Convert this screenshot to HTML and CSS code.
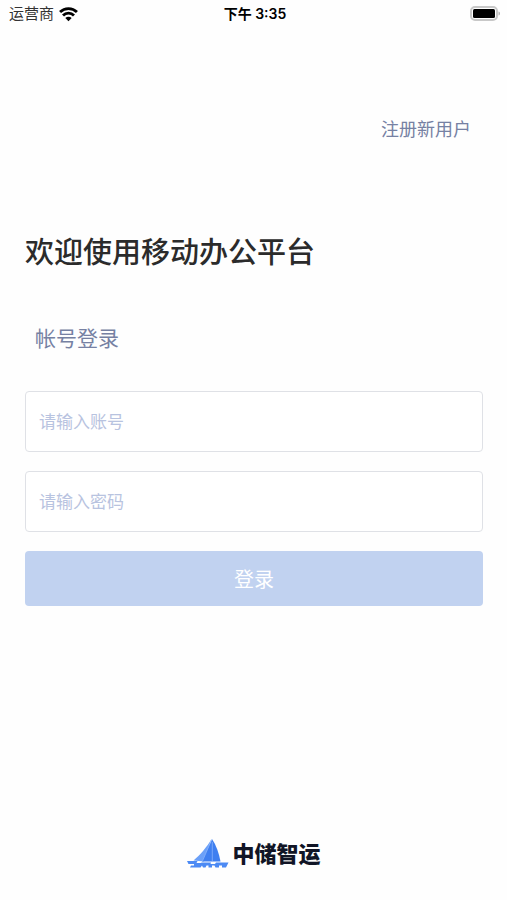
FILE: index.html
```html
<!DOCTYPE html>
<html lang="zh-CN">
<head>
<meta charset="utf-8">
<meta name="viewport" content="width=device-width, initial-scale=1">
<title>中储智运</title>
<link rel="stylesheet" href="styles.css">
</head>
<body>
<header class="status">
  <div class="carrier">
    <span>运营商</span>
    <svg class="wifi" viewBox="0 0 18 14" aria-hidden="true">
      <path d="M1 4.700a11.500 11.500 0 0 1 16 0M3.800 7.900a7.400 7.400 0 0 1 10.400 0" fill="none" stroke="#000" stroke-width="2.700"/>
      <path d="M9 13.300 6 10.300a4.300 4.300 0 0 1 6 0Z"/>
    </svg>
  </div>
  <time class="clock">下午 3:35</time>
  <svg class="battery" viewBox="0 0 31 16" aria-hidden="true">
    <rect x="1" y="1" width="26" height="13" rx="4" fill="#fff" stroke="#c8c8c8" stroke-width="2"/>
    <rect x="3" y="3" width="22" height="9" rx="1.5"/>
    <path d="M28.500 5.500c2 .6 2 3.400 0 4Z" fill="#b4b4b4"/>
  </svg>
</header>
<main class="page">
  <a class="register" href="#">注册新用户</a>
  <h1 class="title">欢迎使用移动办公平台</h1>
  <h2 class="mode">帐号登录</h2>
  <form class="form">
    <input class="field" type="text" placeholder="请输入账号" aria-label="账号">
    <input class="field" type="password" placeholder="请输入密码" aria-label="密码">
    <button class="submit" type="button">登录</button>
  </form>
</main>
<footer class="brand">
  <svg class="boat" viewBox="0 0 43 30" aria-hidden="true">
    <path d="M25.500 0C21 8 14 16 7.500 21.500L18 22.500Z" fill="#6ba0f8"/>
    <path d="M26 0 16 22.500H34.500C33 14 30 6 26 0Z" fill="#3f7ff0"/>
    <path d="M25.500 1 16.500 22M26.300 3V22" fill="none" stroke="#9fc2ff" stroke-width=".6"/>
    <path d="M1 22H11.500L10.500 24H14.500L16 23.500H25L24.500 25H29L30 23.500H42.500L40 28.500H36V26.500H33V28.500H29.500L28.500 26.500H26V28.500H22.500V26.500H20.500L19.500 28.500H17L16 26.500 14.500 28.500H4L5 26.500H8V25H2.500Z" fill="#4c8af4"/>
  </svg>
  <span class="name">中储智运</span>
</footer>
</body>
</html>
```
FILE: styles.css
```css
* {
  box-sizing: border-box;
}

body {
  display: flex;
  flex-direction: column;
  min-height: 100vh;
  margin: 0;
  background: #fefefe;
  color: #2b2b2b;
  font-family: "Inter", "Noto Sans CJK SC", sans-serif;
}

.status {
  display: grid;
  grid-template-columns: 1fr auto 1fr;
  align-items: center;
  height: 28px;
  padding: 0 6px 0 9px;
  color: #000;
  font-size: 15px;
  line-height: 24px;
}

.carrier {
  display: flex;
  align-items: center;
  gap: 5px;
  color: #333;
}

.wifi {
  width: 19px;
  height: 15px;
}

.clock {
  font-size: 14px;
  font-weight: 600;
}

.battery {
  justify-self: end;
  width: 31px;
  height: 16px;
}

.page {
  display: flex;
  flex-direction: column;
  padding: 88px 24px 0 25px;
}

.register {
  align-self: flex-end;
  margin-right: 12px;
  color: #7681a3;
  font-size: 18px;
  line-height: 28px;
  text-decoration: none;
}

.title {
  margin: 88px 0 0;
  font-size: 29px;
  font-weight: 500;
  line-height: 42px;
}

.mode {
  margin: 49px 0 0 10px;
  color: #7681a3;
  font-size: 21px;
  font-weight: 400;
  line-height: 32px;
}

.form {
  display: grid;
  gap: 19px;
  margin-top: 36px;
}

.field {
  width: 100%;
  height: 61px;
  padding: 0 13px;
  border: 1px solid #dfe1e6;
  border-radius: 4px;
  background: #fff;
  color: #2b2b2b;
  font: 17px "Inter", "Noto Sans CJK SC", sans-serif;
}

.field::placeholder {
  color: #b8c3e0;
  opacity: 1;
}

.submit {
  height: 55px;
  padding: 0;
  border: 0;
  border-radius: 4px;
  background: #c1d2f0;
  color: #fff;
  font: 20px "Inter", "Noto Sans CJK SC", sans-serif;
}

.brand {
  display: flex;
  justify-content: center;
  align-items: center;
  gap: 3px;
  margin-top: auto;
  padding-bottom: 30px;
}

.boat {
  width: 43px;
  height: 30px;
}

.name {
  color: #111526;
  font-size: 22px;
  font-weight: 900;
  line-height: 32px;
}
```
